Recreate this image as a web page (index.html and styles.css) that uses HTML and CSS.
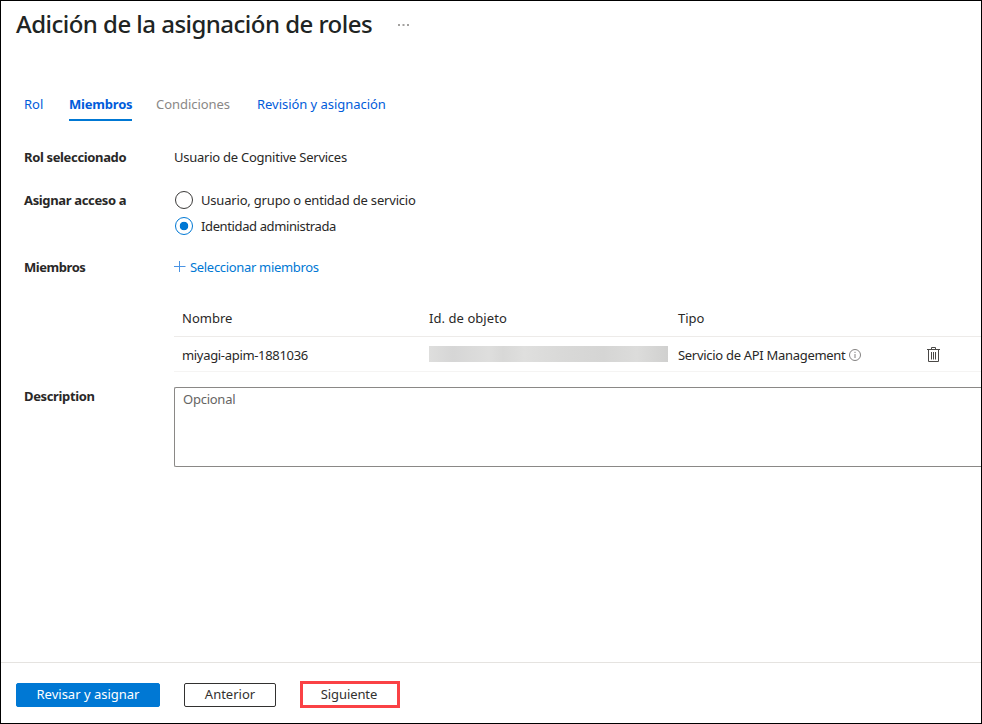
FILE: index.html
```html
<!DOCTYPE html>
<html lang="es">
<head>
<meta charset="utf-8">
<title>Adición de la asignación de roles</title>
<link rel="stylesheet" href="styles.css">
</head>
<body>
<div class="page">
  <header class="header">
    <h1 class="title">Adición de la asignación de roles</h1>
    <svg class="more" width="14" height="4" viewBox="0 0 14 4" fill="#a3a19f"><path d="M1 1h2v2H1zM5.500 1h2v2h-2zM10 1h2v2h-2z"/></svg>
  </header>
  <nav class="tabs">
    <a class="tab tab-role">Rol</a>
    <a class="tab tab-active">Miembros</a>
    <a class="tab tab-disabled">Condiciones</a>
    <a class="tab tab-review">Revisión y asignación</a>
  </nav>
  <main class="form">
    <div class="field field-role">
      <span class="label label-role">Rol seleccionado</span>
      <span class="value">Usuario de Cognitive Services</span>
    </div>
    <div class="field field-access">
      <span class="label label-access">Asignar acceso a</span>
      <div class="options">
        <div class="option"><span class="radio"></span><span class="text-user">Usuario, grupo o entidad de servicio</span></div>
        <div class="option"><span class="radio radio-on"></span><span class="text-identity">Identidad administrada</span></div>
      </div>
    </div>
    <div class="field field-members">
      <span class="label label-members">Miembros</span>
      <a class="add"><svg width="12" height="12" viewBox="0 0 12 12" stroke="#4a94e4" fill="none"><path d="M5.500 0v11M0 5.500h11.500"/></svg><span>Seleccionar miembros</span></a>
    </div>
    <div class="table">
      <div class="row row-head">
        <span class="th-name">Nombre</span><span class="th-id">Id. de objeto</span><span class="th-type">Tipo</span>
      </div>
      <div class="row row-body">
        <span class="td-name">miyagi-apim-1881036</span>
        <span class="redacted"></span>
        <span class="type"><span class="td-type">Servicio de API Management</span>
          <svg width="12" height="12" viewBox="0 0 12 12" fill="none" stroke="#838180"><circle cx="6" cy="6" r="5.500"/><path d="M6 5v4M6 2.800v1.200"/></svg></span>
        <svg class="trash" width="13" height="16" viewBox="0 0 13 16" fill="none" stroke="#4a4846"><path d="M0 2.500h13M4.500 2.500v-2h4v2M1.500 2.500v12h10v-12M4.500 5v7.500M6.500 5v7.500M8.500 5v7.500"/></svg>
      </div>
    </div>
    <div class="field field-description">
      <span class="label label-description">Description</span>
      <div class="textarea"><span>Opcional</span></div>
    </div>
  </main>
  <footer class="footer">
    <button class="button primary">Revisar y asignar</button>
    <button class="button previous">Anterior</button>
    <button class="button next">Siguiente</button>
  </footer>
</div>
</body>
</html>
```
FILE: styles.css
```css
* { box-sizing: border-box; }
body { margin: 0; background: #fff; color: #292827; font: 13px/20px "Noto Sans", "Open Sans", sans-serif; }
.page { width: 982px; height: 724px; border: 1px solid #000; display: flex; flex-direction: column; overflow: hidden; white-space: nowrap; }
.header { display: flex; align-items: center; height: 48px; padding-left: 15px; flex: none; }
.title { margin: -2px 0 0; width: 381px; font-size: 24px; line-height: 32px; font-weight: 500; letter-spacing: -.53px; color: #202423; }
.tabs { display: flex; height: 72px; padding: 45px 0 0 23px; color: #015cda; flex: none; }
.tab { height: 27px; }
.tab-role { width: 45px; }
.tab-active { width: 63px; margin-right: 24px; font-weight: 700; letter-spacing: -.2px; border-bottom: 2px solid #0078d4; }
.tab-disabled { width: 101px; color: #8a8886; letter-spacing: -.05px; }
.tab-review { letter-spacing: -.04px; }
.form { padding-left: 23px; flex: 1; }
.field { display: grid; grid-template-columns: 150px 1fr; }
.label { font-weight: 700; letter-spacing: -.35px; }
.value { letter-spacing: -.25px; }
.field-role { margin-top: 26px; height: 43px; }
.field-access { height: 67px; }
.option { display: flex; align-items: center; gap: 8px; height: 20px; margin-bottom: 6px; }
.text-user { letter-spacing: -.19px; }
.text-identity { letter-spacing: -.38px; }
.radio { width: 18px; height: 18px; margin-left: 1px; border: 1px solid #3b3a39; border-radius: 50%; }
.radio-on { border-color: #0078d4; background: radial-gradient(circle, #0078d4 0 4px, transparent 4.6px); }
.field-members { height: 43px; }
.label-members { letter-spacing: -.45px; }
.add { display: flex; gap: 4px; color: #0078d4; letter-spacing: -.32px; }
.add svg { margin-top: 4px; }
.table { margin-left: 150px; }
.row { display: grid; grid-template-columns: 247px 249px 249px auto; padding-left: 8px; align-items: center; }
.row-head { height: 37px; border-bottom: 1px solid #edebe9; }
.row-body { height: 35px; border-bottom: 1px solid #f5f4f3; padding-top: 1px; }
.th-id { letter-spacing: .06px; }
.td-name { letter-spacing: -.32px; }
.td-type { letter-spacing: -.3px; }
.redacted { width: 239px; height: 16px; margin-top: -1px; background: linear-gradient(90deg, #dededd, #d6d6d6 10%, #dededd 25%, #d8d8d7 31%, #dfdfde 40%, #d9d9d8 55%, #d5d5d4 73%, #dcdcdb 87%, #d0d0cf); }
.type { display: flex; align-items: center; gap: 4px; }
.trash { margin-top: 1px; }
.field-description { margin-top: 15px; }
.label-description { margin-top: -1px; letter-spacing: -.35px; }
.textarea { height: 80px; border: 1px solid #8a8886; border-right: 0; border-radius: 2px 0 0 2px; padding: 1px 8px; color: #666463; letter-spacing: -.25px; }
.footer { height: 61px; border-top: 1px solid #e5e3e0; padding: 20px 15px 0; display: flex; align-items: flex-start; flex: none; }
.button { height: 24px; padding: 0 0 2px; background: #fff; color: #323130; font: inherit; border: 1px solid #323130; border-radius: 2px; }
.primary { width: 144px; margin-right: 24px; background: #0078d4; border-color: #0078d4; color: #fff; }
.previous { width: 92px; margin-right: 24px; }
.next { width: 100px; height: 27px; margin-top: -2px; padding-right: 2px; border: 3px solid #fa4145; border-radius: 0; letter-spacing: -.1px; }
```
